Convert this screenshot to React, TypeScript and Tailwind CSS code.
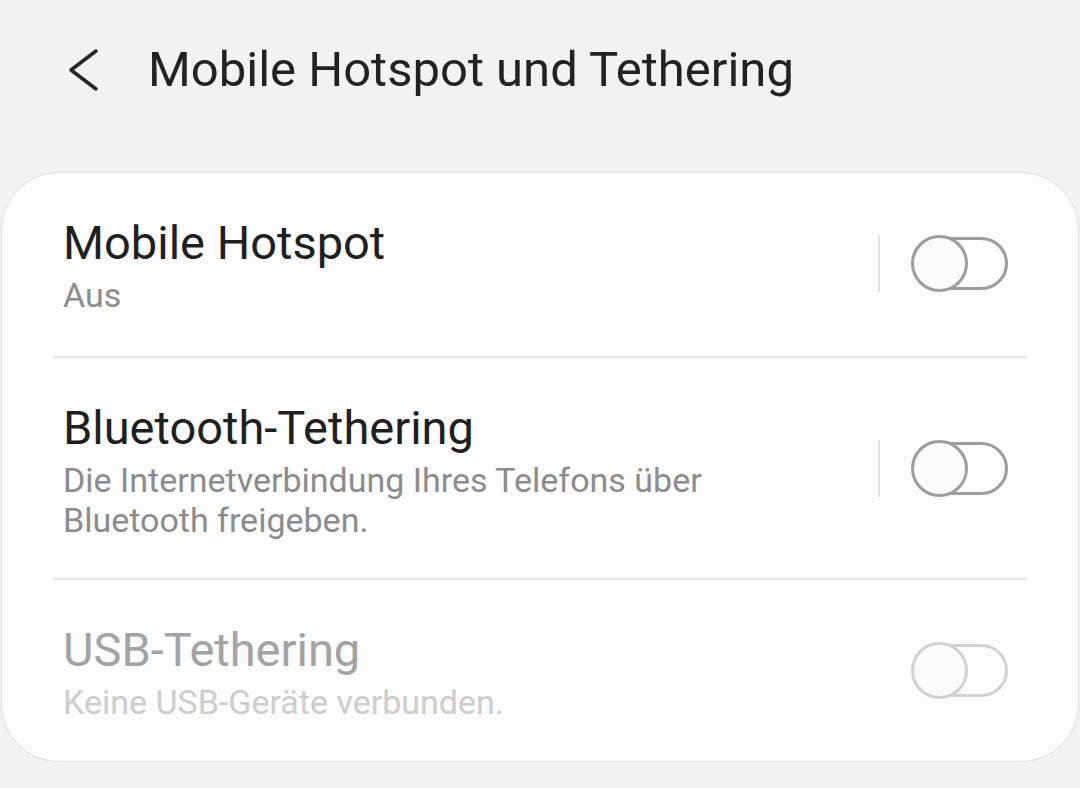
import React from 'react';

type RowProps = {
  title: string;
  subtitle: string;
  disabled?: boolean;
  divider?: boolean;
  separator?: boolean;
  bottom: string;
};

const Toggle: React.FC<{ disabled?: boolean }> = ({ disabled }) => {
  const border = disabled ? 'border-[#d2d2d2]' : 'border-[#9d9d9d]';
  return (
    <div className="relative w-[97px] h-[57px] flex items-center">
      <div className={`ml-[1px] w-[96px] h-[53px] rounded-full border-[3px] ${border}`} />
      <div
        className={`absolute left-0 top-0 w-[57px] h-[57px] rounded-full border-[3px] bg-[#fbfbfb] ${border}`}
      />
    </div>
  );
};

const Row: React.FC<RowProps> = ({ title, subtitle, disabled, divider, separator = true, bottom }) => {
  return (
    <div className={divider ? 'border-t-2 border-[#e5e5e5]' : ''}>
      <div className={`flex items-center pl-[10px] pr-[19px] pt-[42px] ${bottom}`}>
        <div className="flex-1 min-w-0">
          <div
            className={`text-[47px] leading-[56px] ${disabled ? 'text-[#a3a3a3]' : 'text-[#1f1f1f]'}`}
          >
            {title}
          </div>
          <div
            className={`mt-1 text-[34px] leading-[40px] max-w-[700px] ${
              disabled ? 'text-[#cdcdcd]' : 'text-[#8c8c8c]'
            }`}
          >
            {subtitle}
          </div>
        </div>
        {separator ? (
          <div className="w-[2px] h-[57px] bg-[#e3e3e3] mr-[31px] -translate-y-[2px]" />
        ) : (
          <div className="w-[2px] h-[57px] mr-[31px]" />
        )}
        <div className="-translate-y-[2px]">
          <Toggle disabled={disabled} />
        </div>
      </div>
    </div>
  );
};

export default function App() {
  return (
    <div
      className="w-[1080px] h-[788px] bg-[#f2f2f2] overflow-hidden"
      style={{ fontFamily: 'Roboto, "Noto Sans", sans-serif' }}
    >
      {/* Header */}
      <div className="flex items-center pt-[40px] pl-[68px]">
        <svg width="32" height="44" viewBox="0 0 32 44" fill="none">
          <path
            d="M28 3 L3 22 L28 41"
            stroke="#262626"
            strokeWidth="3.5"
            strokeLinecap="round"
            strokeLinejoin="round"
          />
        </svg>
        <h1 className="ml-[48px] text-[49px] leading-[60px] text-[#222222] font-normal">
          Mobile Hotspot und Tethering
        </h1>
      </div>

      {/* Settings card */}
      <div className="mt-[72px] mx-[1px] rounded-[58px] border border-[#e0e0e0] bg-[#fcfcfc] px-[51px]">
        <Row title="Mobile Hotspot" subtitle="Aus" bottom="pb-[41px]" />
        <Row
          divider
          bottom="pb-[38px]"
          title="Bluetooth-Tethering"
          subtitle="Die Internetverbindung Ihres Telefons über Bluetooth freigeben."
        />
        <Row
          divider
          disabled
          separator={false}
          bottom="pb-[39px]"
          title="USB-Tethering"
          subtitle="Keine USB-Geräte verbunden."
        />
      </div>
    </div>
  );
}
